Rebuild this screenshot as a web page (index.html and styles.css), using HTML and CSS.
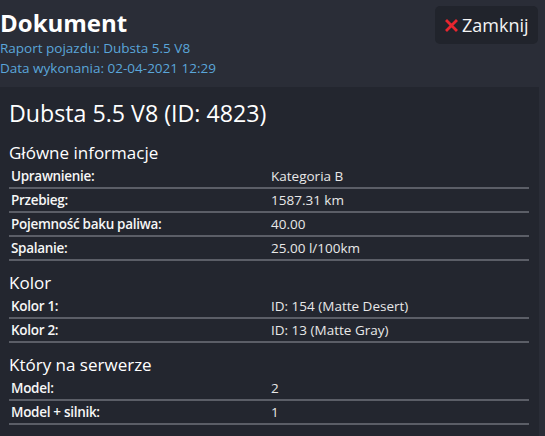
FILE: index.html
```html
<!DOCTYPE html>
<html lang="pl">
<head>
<meta charset="utf-8">
<link rel="stylesheet" href="styles.css">
</head>
<body>
<div class="page">
  <header class="top">
    <div class="intro">
      <h1 class="title">Dokument</h1>
      <div class="sub">Raport pojazdu: Dubsta 5.5 V8</div>
      <div class="sub">Data wykonania: 02-04-2021 12:29</div>
    </div>
    <button class="close"><svg class="x" viewBox="0 0 13 13" width="13" height="13"><path d="M2 2L11 11M11 2L2 11" stroke="#e8262f" stroke-width="2.8" stroke-linecap="square"/></svg>Zamknij</button>
  </header>
  <section class="card">
    <h2 class="name">Dubsta 5.5 V8 (ID: 4823)</h2>
    <h3 class="sec">Główne informacje</h3>
    <div class="table">
      <div class="row"><span class="k">Uprawnienie:</span><span class="v">Kategoria B</span></div>
      <div class="row"><span class="k">Przebieg:</span><span class="v">1587.31 km</span></div>
      <div class="row"><span class="k">Pojemność baku paliwa:</span><span class="v">40.00</span></div>
      <div class="row"><span class="k">Spalanie:</span><span class="v">25.00 l/100km</span></div>
    </div>
    <h3 class="sec">Kolor</h3>
    <div class="table">
      <div class="row"><span class="k">Kolor 1:</span><span class="v">ID: 154 (Matte Desert)</span></div>
      <div class="row"><span class="k">Kolor 2:</span><span class="v">ID: 13 (Matte Gray)</span></div>
    </div>
    <h3 class="sec">Który na serwerze</h3>
    <div class="table">
      <div class="row"><span class="k">Model:</span><span class="v">2</span></div>
      <div class="row"><span class="k">Model + silnik:</span><span class="v">1</span></div>
    </div>
  </section>
</div>
</body>
</html>
```
FILE: styles.css
```css
html, body { margin: 0; padding: 0; }
body {
  background: #2a2d37;
  font-family: "Open Sans", sans-serif;
  color: #f2f2f2;
  height: 436px;
  overflow: hidden;
}
.page { width: 539px; }
.top {
  display: flex;
  justify-content: space-between;
  align-items: flex-start;
  height: 87px;
}
.title {
  margin: 0;
  font-size: 24px;
  font-weight: 700;
  line-height: 30px;
  padding-top: 8px;
  color: #ffffff;
}
.sub {
  font-size: 13.5px;
  line-height: 20px;
  color: #5aa6da;
}
.close {
  margin-top: 6px;
  margin-right: 1px;
  width: 103px;
  height: 38px;
  padding: 0 0 0 10px;
  display: flex;
  align-items: center;
  gap: 4px;
  background: #21242c;
  border: none;
  border-radius: 5px;
  color: #f4f4f4;
  font-family: "Open Sans", sans-serif;
  font-size: 18px;
}
.x { display: block; }
.card {
  background: #23262f;
  padding: 8px 10px 20px 9px;
  min-height: 349px;
  box-sizing: border-box;
}
.name {
  margin: 0;
  font-weight: 400;
  font-size: 23.2px;
  line-height: 36px;
  color: #ffffff;
}
.sec {
  margin: 0;
  font-weight: 400;
  font-size: 17px;
  line-height: 24px;
  color: #ffffff;
  padding-top: 10px;
}
.table { display: flex; flex-direction: column; }
.row {
  display: grid;
  grid-template-columns: 262px 1fr;
  height: 22px;
  align-items: center;
  border-bottom: 2px solid #5b5e67;
  font-size: 13.5px;
}
.k { font-weight: 600; padding-left: 2px; letter-spacing: -0.3px; color: #f6f6f6; }
.v { color: #e8e8e8; }
```
